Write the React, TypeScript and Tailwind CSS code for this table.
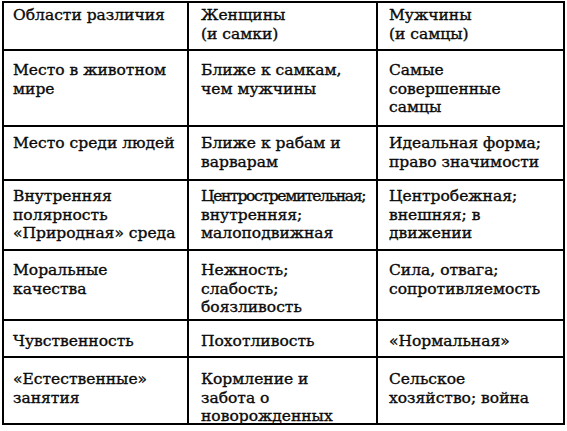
type Line = string | { t: string; cls: string };

const rows: { h: string; pt: string; cells: Line[][] }[] = [
  {
    h: 'h-[48px]',
    pt: 'pt-[3px]',
    cells: [['Области различия'], ['Женщины', '(и самки)'], ['Мужчины', '(и самцы)']],
  },
  {
    h: 'h-[76px]',
    pt: 'pt-[10px]',
    cells: [['Место в животном', 'мире'], ['Ближе к самкам,', 'чем мужчины'], ['Самые', 'совершенные', 'самцы']],
  },
  {
    h: 'h-[54px]',
    pt: 'pt-[7px]',
    cells: [['Место среди людей'], ['Ближе к рабам и', 'варварам'], ['Идеальная форма;', 'право значимости']],
  },
  {
    h: 'h-[70px]',
    pt: 'pt-[6px]',
    cells: [
      ['Внутренняя', 'полярность', '«Природная» среда'],
      [{ t: 'Центростремительная;', cls: 'tracking-[-1.3px]' }, 'внутренняя;', 'малоподвижная'],
      ['Центробежная;', 'внешняя; в', 'движении'],
    ],
  },
  {
    h: 'h-[70px]',
    pt: 'pt-[10px]',
    cells: [['Моральные', 'качества'], ['Нежность;', 'слабость;', 'боязливость'], ['Сила, отвага;', 'сопротивляемость']],
  },
  {
    h: 'h-[37px]',
    pt: 'pt-[11px]',
    cells: [['Чувственность'], ['Похотливость'], ['«Нормальная»']],
  },
  {
    h: 'h-[65px]',
    pt: 'pt-[12px]',
    cells: [['«Естественные»', 'занятия'], ['Кормление и', 'забота о', 'новорожденных'], ['Сельское', 'хозяйство; война']],
  },
];

const colW = ['w-[185px] pl-[9px]', 'w-[189px] pl-[12px]', 'w-[185px] pl-[11px]'];

export default function App() {
  return (
    <div className="min-h-screen bg-white pl-[2px] pt-[1px]">
      <div
        className="w-[563px] border-2 border-black text-[15.5px] leading-[18.5px] text-[#0a0a0a] [-webkit-text-stroke:0.35px_#0a0a0a]"
        style={{ fontFamily: '"DejaVu Serif", "Liberation Serif", serif' }}
      >
        {rows.map((row, ri) => (
          <div
            key={ri}
            className={`flex ${row.h} ${ri < rows.length - 1 ? 'border-b-2 border-black' : ''}`}
          >
            {row.cells.map((lines, ci) => (
              <div
                key={ci}
                className={`${colW[ci]} ${row.pt} ${ci < 2 ? 'border-r-2 border-black' : ''} whitespace-nowrap`}
              >
                {lines.map((l, li) =>
                  typeof l === 'string' ? (
                    <div key={li}>{l}</div>
                  ) : (
                    <div key={li} className={l.cls}>
                      {l.t}
                    </div>
                  )
                )}
              </div>
            ))}
          </div>
        ))}
      </div>
    </div>
  );
}
